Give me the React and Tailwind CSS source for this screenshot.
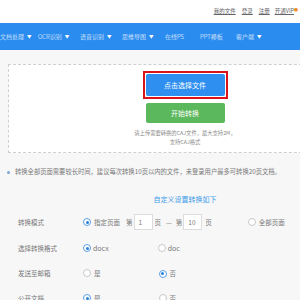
import React from "react";

const Radio = ({ checked }) => (
  <span
    className={
      "inline-flex items-center justify-center w-[8px] h-[8px] rounded-full border bg-white " +
      (checked ? "border-[#5aa0e8]" : "border-[#c8c8c8]")
    }
  >
    {checked && <span className="w-[3px] h-[3px] rounded-full bg-[#2b7fd8]" />}
  </span>
);

const Caret = () => <span className="ml-[3px] text-[4.5px]">▼</span>;

export default function App() {
  return (
    <div className="w-[300px] h-[300px] overflow-hidden bg-[#f7f7f7] text-[#666] font-['Noto_Sans_CJK_SC','Noto_Sans',sans-serif] leading-none">
      {/* top bar */}
      <div className="h-[23px] bg-white flex items-center justify-end pr-[2px] text-[5.5px] text-[#666]">
        <span className="underline mr-[6px]">我的文件</span>
        <span className="underline mr-[6px]">登录</span>
        <span className="underline mr-[5px]">注册</span>
        <span className="underline">开通VIP</span>
        <span className="text-[#f08a24] text-[4px] -mt-[4px]">●</span>
      </div>
      {/* nav */}
      <div className="h-[27px] bg-[#2b8cf0] flex items-center text-white text-[6px] whitespace-nowrap font-light">
        <span className="w-[38px] flex items-center">文档处理<Caret /></span>
        <span className="w-[42px] flex items-center">OCR识别<Caret /></span>
        <span className="w-[42px] flex items-center">语音识别<Caret /></span>
        <span className="w-[43px] flex items-center">思维导图<Caret /></span>
        <span className="w-[35px]">在线PS</span>
        <span className="w-[36px]">PPT模板</span>
        <span className="flex items-center">客户端<Caret /></span>
      </div>
      {/* upload box */}
      <div className="pt-[14px] pl-[8px]">
        <div className="w-[354px] h-[89px] bg-white border border-dashed border-[#cfcfcf] flex flex-col items-center pt-[6px]">
          <div className="border-2 border-[#d9121c] p-[1px]">
            <div className="w-[79px] h-[22px] bg-[#2f8ff0] rounded-[2px] flex items-center justify-center text-white text-[7px]">
              点击选择文件
            </div>
          </div>
          <div className="mt-[4px] w-[79px] h-[20px] bg-[#5cb85c] rounded-[2px] flex items-center justify-center text-white text-[7px]">
            开始转换
          </div>
          <div className="mt-[6px] text-[5.3px] text-[#888] text-center leading-[9px]">
            请上传需要转换的CAJ文件，最大支持2M，
            <br />
            支持CAJ格式
          </div>
        </div>
      </div>
      {/* notice */}
      <div className="mt-[16px] flex items-center text-[6.3px] text-[#777] whitespace-nowrap">
        <span className="ml-[7px] w-[3px] h-[3px] rounded-full bg-[#7aa7d8]" />
        <span className="ml-[5px]">
          转换全部页面需要较长时间，建议每次转换10页以内的文件，未登录用户最多可转换20页文档。
        </span>
      </div>
      <div className="mt-[21px] text-center pl-[70px] text-[7px] text-[#3d9be9]">自定义设置转换如下</div>
      {/* form rows */}
      <div className="mt-[11px] flex flex-col text-[6.5px] text-[#777]">
        <div className="h-[16px] flex items-center">
          <span className="ml-[18px] w-[65px]">转换模式</span>
          <Radio checked />
          <span className="ml-[3px]">指定页面</span>
          <span className="ml-[6px]">第</span>
          <span className="ml-[1px] w-[19px] h-[16px] bg-white border border-[#ddd] flex items-center pl-[4px]">1</span>
          <span className="ml-[2px]">页</span>
          <span className="ml-[5px]">—</span>
          <span className="ml-[4px]">第</span>
          <span className="ml-[1px] w-[19px] h-[16px] bg-white border border-[#ddd] flex items-center pl-[4px]">10</span>
          <span className="ml-[3px]">页</span>
          <span className="ml-[36px]"><Radio /></span>
          <span className="ml-[3px]">全部页面</span>
        </div>
        <div className="mt-[10px] h-[16px] flex items-center">
          <span className="ml-[18px] w-[65px]">选择转换格式</span>
          <Radio checked />
          <span className="ml-[2px] text-[7px]">docx</span>
          <span className="ml-[49px]"><Radio /></span>
          <span className="ml-[2px] text-[7px]">doc</span>
        </div>
        <div className="mt-[9px] h-[16px] flex items-center">
          <span className="ml-[18px] w-[65px]">发送至邮箱</span>
          <Radio />
          <span className="ml-[3px]">是</span>
          <span className="ml-[58px]"><Radio checked /></span>
          <span className="ml-[3px]">否</span>
        </div>
        <div className="mt-[9px] h-[16px] flex items-center">
          <span className="ml-[18px] w-[65px]">公开文档</span>
          <Radio checked />
          <span className="ml-[3px]">是</span>
          <span className="ml-[58px]"><Radio /></span>
          <span className="ml-[3px]">否</span>
        </div>
      </div>
    </div>
  );
}
